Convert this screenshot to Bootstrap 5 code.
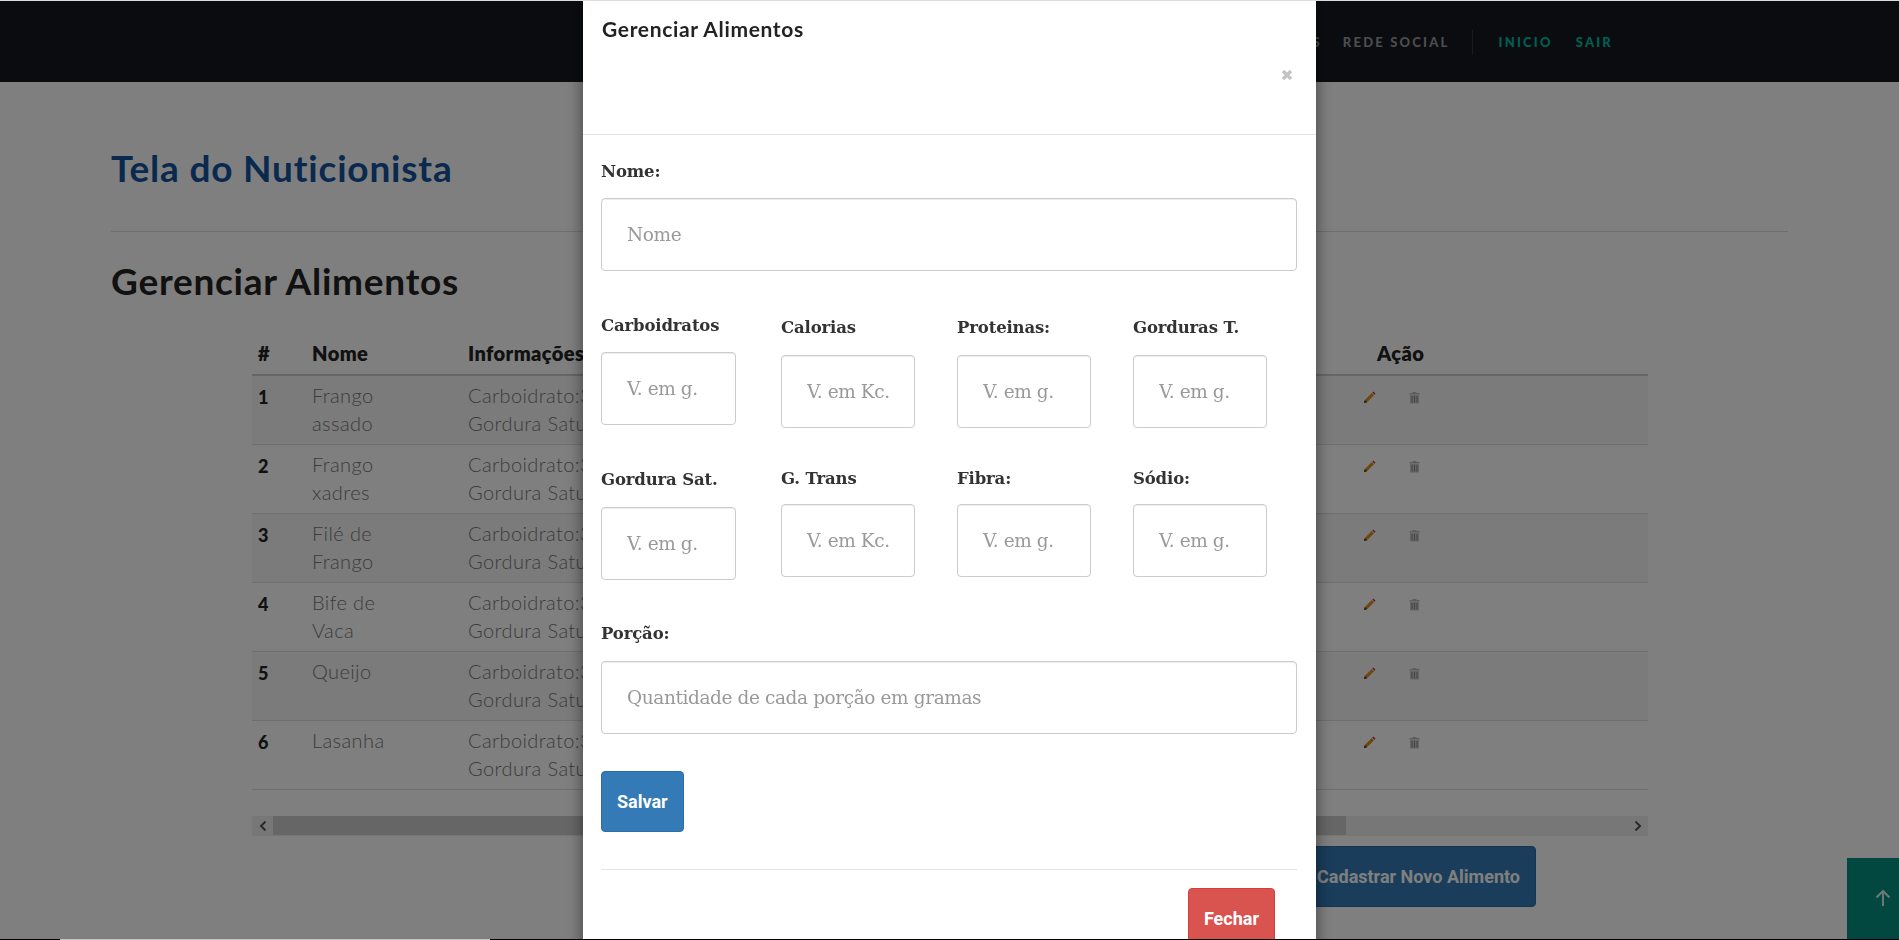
<!DOCTYPE html>
<html lang="pt-BR">
  <head>
    <meta charset="UTF-8" />
    <meta name="viewport" content="width=device-width, initial-scale=1.0" />
    <title>Tela do Nuticionista</title>
    <link href="https://cdn.jsdelivr.net/npm/bootstrap@5.3.2/dist/css/bootstrap.min.css" rel="stylesheet" />
    <style>
      body {
        font-family: "Lato", "Liberation Sans", sans-serif;
        background-color: #fff;
        overflow: hidden;
        height: 940px;
      }
      /* 1px edges of the browser capture */
      .edge-top {
        position: fixed; top: 0; left: 0; right: 0; height: 1px;
        background: #dcdcdc; z-index: 2000;
      }
      .edge-bottom {
        position: fixed; bottom: 0; left: 0; right: 0; height: 1px;
        background: #000; z-index: 2000;
      }
      .edge-bottom span { display: block; margin-left: 60px; width: 430px; height: 1px; background: #c4c4c4; }

      .top-nav { background: #15191f; height: 82px; padding: 3px 286px 0 0; }
      .top-link {
        font-weight: 900; font-size: 13px; letter-spacing: 2.2px;
        text-transform: uppercase; color: #979a9e; text-decoration: none;
      }
      .top-link-green { color: #00bfa5; }
      .top-link-gap { margin-right: 21px; }
      .top-link-gap2 { margin-right: 23px; }
      .top-sep { width: 1px; height: 25px; background: #34373c; margin: 0 26px 0 22px; }

      .page-wrap { padding: 0 111px; }
      .page-title {
        font-weight: 700; font-size: 37px; line-height: 44px; color: #14539f;
        margin: 64px 0 41px 0; letter-spacing: .8px;
      }
      .page-rule { margin: 0; border-top: 1px solid #dcdcdc; opacity: 1; }
      .page-sub {
        font-weight: 700; font-size: 37px; line-height: 44px; color: #222;
        margin: 27px 0 35px 0; letter-spacing: .75px;
      }

      .food-wrap { width: 1396px; margin: 0 0 0 141px; }
      .food-table { table-layout: fixed; margin: 0; width: 1396px; color: #777; font-size: 20px; font-weight: 300; }
      .food-table > thead > tr > th {
        padding: 1px 6px 7px; font-size: 20px; line-height: 28px; font-weight: 800; color: #222;
        border-bottom: 2px solid #ccc; letter-spacing: .4px;
      }
      .food-table > tbody > tr > td {
        padding: 6px 6px 7px; line-height: 27.5px; border-bottom: 1px solid #ddd; background: transparent; box-shadow: none; color: #777; letter-spacing: .4px;
      }
      .food-table > tbody > tr:nth-of-type(odd) > td { background: #f6f6f6; }
      .food-table > tbody > tr > td.food-num { font-weight: 900; color: #222; font-size: 18px; padding-top: 8px; padding-bottom: 5px; }
      .acao-head { padding-left: 20px !important; }
      .acao-icons { display: flex; gap: 33px; padding-top: 9px; line-height: 1; }

      .fake-scroll { display: flex; height: 20px; margin-top: 26px; background: #efefef; }
      .fake-scroll-btn { width: 21px; display: flex; align-items: center; justify-content: center; }
      .fake-scroll-thumb { width: 1073px; background: #cdcdcd; height: 19px; }
      .fake-scroll-fill { flex: 1; }

      .new-row { display: flex; justify-content: flex-end; margin: 10px 252px 0 0; }
      .new-btn, .save-btn, .close-btn {
        font-family: "Roboto", sans-serif; font-weight: 700; font-size: 18px; line-height: 23px; color: #fff;
        padding: 18px 15px; border-radius: 4px;
      }
      .new-btn { background: #337ab7; border: 1px solid #2e6da4; }

      .to-top {
        position: fixed; right: 0; bottom: 0; width: 52px; height: 82px;
        background: #069180; display: flex; align-items: center; justify-content: flex-end; padding-right: 7px; padding-bottom: 2px;
      }

      .modal.food-modal { overflow: hidden; display: block; }
      .food-modal .modal-dialog { max-width: 733px; margin: 0 auto; }
      .food-modal .modal-content {
        border: 0; border-radius: 0; height: 950px; box-shadow: 0 5px 15px rgba(0, 0, 0, .5); color: #333;
      }
      .food-modal .modal-header {
        display: block; height: 135px; padding: 17px 23px 0 19px; border-bottom: 1px solid #e5e5e5; border-radius: 0;
      }
      .modal-name { font-size: 21px; line-height: 24px; font-weight: 700; color: #222; margin: 0; letter-spacing: .65px; }
      .close-mark { display: block; margin: 28px 0 0 auto; }
      .food-modal .modal-body { padding: 25px 19px 0 18px; }
      .nut-label {
        font-family: "DejaVu Serif", "Liberation Serif", serif; font-weight: 700; font-size: 16.5px;
        line-height: 24px; color: #333; margin: 0 0 14px; display: block; letter-spacing: -.15px;
      }
      .nut-input {
        height: 73px; padding: 0 25px; border: 1px solid #ccc; border-radius: 4px;
        font-family: "DejaVu Serif", "Liberation Serif", serif; font-size: 18.5px; color: #333;
        box-shadow: inset 0 1px 1px rgba(0, 0, 0, .075); letter-spacing: -.4px;
      }
      .nut-input::placeholder { color: #999; opacity: 1; }
      .nut-small { padding: 0 0 0 25px; width: 134px; }
      .nut-grid { display: grid; grid-template-columns: 180px 176px 176px 176px; }
      .nut-grid-a { margin-top: 43px; }
      .nut-grid-b { margin-top: 39px; }
      .nut-first .nut-input { width: 135px; }
      .nut-shift2 { margin-top: 2px; }
      .nut-shift2 .nut-label { margin-bottom: 15px; }
      .nut-grid-b .nut-first { margin-top: 1px; }
      .nut-grid-b .nut-first .nut-label { margin-bottom: 15px; }
      .nut-grid-b .nut-rest .nut-label { margin-bottom: 13px; }
      .portion-field { margin-top: 42px; }
      .portion-field .nut-label { margin-bottom: 15px; }
      .save-btn { background: #337ab7; border: 1px solid #2e6da4; margin-top: 37px; }
      .close-btn { background: #d9534f; border: 1px solid #d43f3a; }
      .foot-rule { margin: 37px 0 0; border-top: 1px solid #e5e5e5; opacity: 1; }
      .foot-row { display: flex; justify-content: flex-end; padding: 18px 22px 0 0; }
    </style>
  </head>
  <body>
    <div class="edge-top"></div>
    <div class="edge-bottom"><span></span></div>

    <nav class="top-nav d-flex align-items-center justify-content-end">
      <a class="top-link top-link-gap" href="#">Receitas</a>
      <a class="top-link" href="#">Rede Social</a>
      <span class="top-sep"></span>
      <a class="top-link top-link-green top-link-gap2" href="#">Inicio</a>
      <a class="top-link top-link-green" href="#">Sair</a>
    </nav>

    <main class="page-wrap">
      <h1 class="page-title">Tela do Nuticionista</h1>
      <hr class="page-rule" />
      <h2 class="page-sub">Gerenciar Alimentos</h2>

      <div class="food-wrap">
        <table class="table food-table">
          <colgroup>
            <col style="width: 54px" />
            <col style="width: 156px" />
            <col style="width: 895px" />
            <col />
          </colgroup>
          <thead>
            <tr><th>#</th><th>Nome</th><th>Informações</th><th class="acao-head">Ação</th></tr>
          </thead>
          <tbody id="food-rows"></tbody>
        </table>
        <div class="fake-scroll">
          <div class="fake-scroll-btn">
            <svg width="8" height="10" viewBox="0 0 8 10"><path d="M6.5 .5 2 5l4.5 4.5" fill="none" stroke="#555" stroke-width="2"/></svg>
          </div>
          <div class="fake-scroll-thumb"></div>
          <div class="fake-scroll-fill"></div>
          <div class="fake-scroll-btn">
            <svg width="8" height="10" viewBox="0 0 8 10"><path d="M1.5 .5 6 5 1.5 9.500" fill="none" stroke="#555" stroke-width="2"/></svg>
          </div>
        </div>
      </div>

      <div class="new-row">
        <button type="button" class="btn new-btn">Cadastrar Novo Alimento</button>
      </div>
    </main>

    <a class="to-top" href="#">
      <svg width="18" height="18" viewBox="0 0 18 18"><path d="M9 17V2M2.500 8.500 9 2l6.500 6.500" fill="none" stroke="#fff" stroke-opacity=".85" stroke-width="2"/></svg>
    </a>

    <div class="modal-backdrop show"></div>
    <div class="modal food-modal" tabindex="-1">
      <div class="modal-dialog">
        <div class="modal-content">
          <div class="modal-header">
            <h5 class="modal-name">Gerenciar Alimentos</h5>
            <svg class="close-mark" width="12" height="12" viewBox="0 0 12 12"><path d="M2 2l8 8M10 2l-8 8" stroke="#c4c4c4" stroke-width="3.500"/></svg>
          </div>
          <div class="modal-body">
            <form>
              <label class="nut-label">Nome:</label>
              <input type="text" class="form-control nut-input" placeholder="Nome" />

              <div class="nut-grid nut-grid-a">
                <div class="nut-first">
                  <label class="nut-label">Carboidratos</label>
                  <input type="text" class="form-control nut-input nut-small" placeholder="V. em g." />
                </div>
                <div class="nut-shift2">
                  <label class="nut-label">Calorias</label>
                  <input type="text" class="form-control nut-input nut-small" placeholder="V. em Kc." />
                </div>
                <div class="nut-shift2">
                  <label class="nut-label">Proteinas:</label>
                  <input type="text" class="form-control nut-input nut-small" placeholder="V. em g." />
                </div>
                <div class="nut-shift2">
                  <label class="nut-label">Gorduras T.</label>
                  <input type="text" class="form-control nut-input nut-small" placeholder="V. em g." />
                </div>
              </div>

              <div class="nut-grid nut-grid-b">
                <div class="nut-first">
                  <label class="nut-label">Gordura Sat.</label>
                  <input type="text" class="form-control nut-input nut-small" placeholder="V. em g." />
                </div>
                <div class="nut-rest">
                  <label class="nut-label">G. Trans</label>
                  <input type="text" class="form-control nut-input nut-small" placeholder="V. em Kc." />
                </div>
                <div class="nut-rest">
                  <label class="nut-label">Fibra:</label>
                  <input type="text" class="form-control nut-input nut-small" placeholder="V. em g." />
                </div>
                <div class="nut-rest">
                  <label class="nut-label">Sódio:</label>
                  <input type="text" class="form-control nut-input nut-small" placeholder="V. em g." />
                </div>
              </div>

              <div class="portion-field">
                <label class="nut-label">Porção:</label>
                <input type="text" class="form-control nut-input" placeholder="Quantidade de cada porção em gramas" />
              </div>

              <button type="button" class="btn save-btn">Salvar</button>
            </form>
            <hr class="foot-rule" />
            <div class="foot-row">
              <button type="button" class="btn close-btn">Fechar</button>
            </div>
          </div>
        </div>
      </div>
    </div>

    <script src="https://cdn.jsdelivr.net/npm/bootstrap@5.3.2/dist/js/bootstrap.bundle.min.js"></script>
    <script>
      const foods = [
        ["Frango", "assado"],
        ["Frango", "xadres"],
        ["Filé de", "Frango"],
        ["Bife de", "Vaca"],
        ["Queijo", ""],
        ["Lasanha", ""],
      ];
      const pencil =
        '<svg width="13" height="13" viewBox="0 0 13 13"><path d="M1 12l.8-3 7-7 2.200 2.200-7 7z" fill="#e08a1e"/><path d="M1 12l.8-3 2.200 2.200z" fill="#3a2a18"/><path d="M9.300 1.500l1-1 2.200 2.200-1 1z" fill="#c2224a"/></svg>';
      const trash =
        '<svg width="11" height="13" viewBox="0 0 11 13"><path d="M3.500 1h4v1h3v1.500H.5V2h3z" fill="#bbb"/><path d="M1 4h9v8.500H1z" fill="#c8c8c8"/><path d="M3 5v6.500M5.500 5v6.500M8 5v6.500" stroke="#8a8a8a" stroke-width="1"/></svg>';
      document.getElementById("food-rows").innerHTML = foods
        .map(
          (f, i) => `<tr>
            <td class="food-num">${i + 1}</td>
            <td>${f[0]}<br />${f[1] || "&nbsp;"}</td>
            <td>Carboidrato:30g<br />Gordura Saturada:2g</td>
            <td><div class="acao-icons">${pencil}${trash}</div></td>
          </tr>`
        )
        .join("");
    </script>
  </body>
</html>
